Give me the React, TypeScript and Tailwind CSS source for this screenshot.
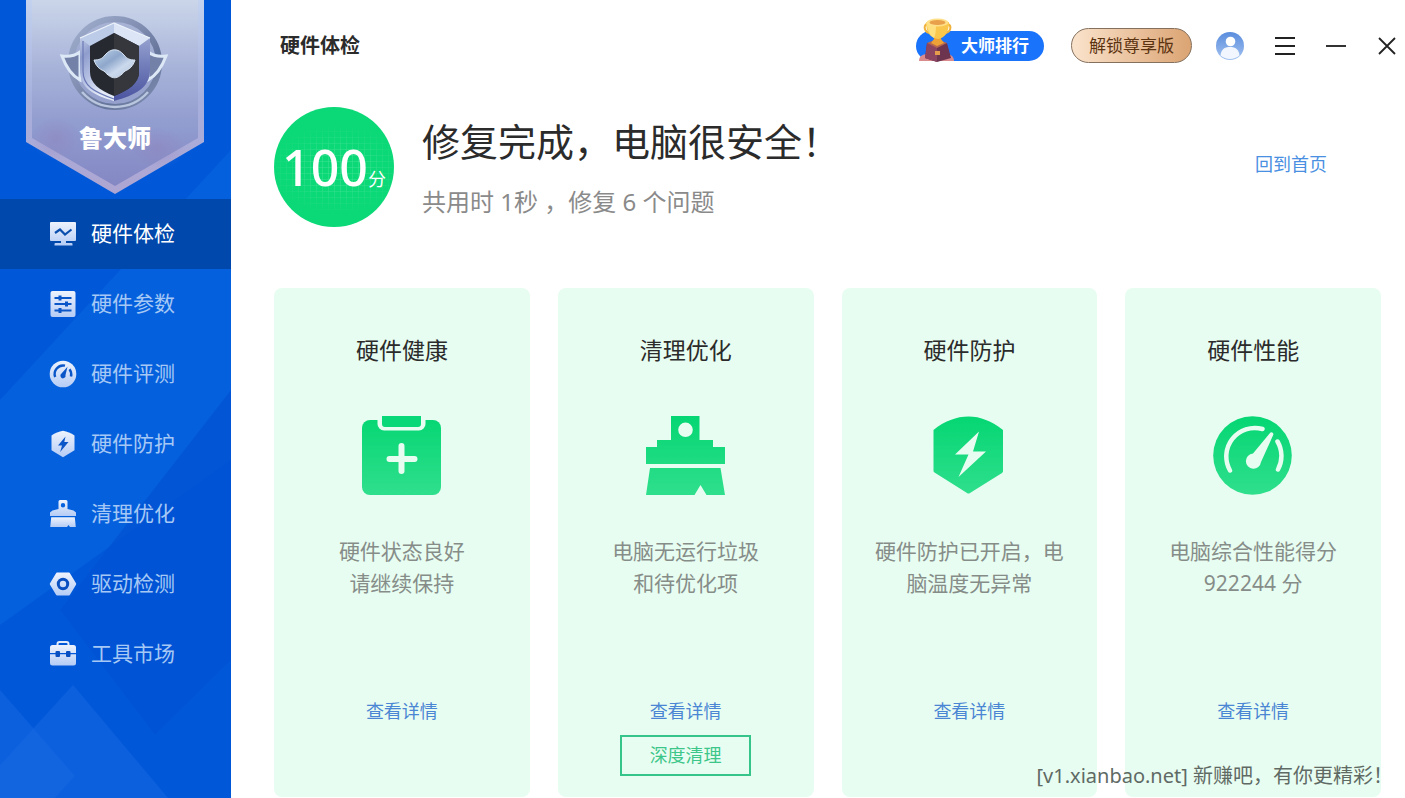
import type { ReactNode } from 'react';
import clsx from 'clsx';

const NAV = [
  { label: '硬件体检', icon: MonitorIcon },
  { label: '硬件参数', icon: SlidersIcon },
  { label: '硬件评测', icon: GaugeIcon },
  { label: '硬件防护', icon: BoltIcon },
  { label: '清理优化', icon: BrushIcon },
  { label: '驱动检测', icon: NutIcon },
  { label: '工具市场', icon: ToolboxIcon },
];

const CARDS = [
  { title: '硬件健康', text: '硬件状态良好\n请继续保持', icon: ClipboardArt },
  { title: '清理优化', text: '电脑无运行垃圾\n和待优化项', icon: BrushArt, action: '深度清理' },
  { title: '硬件防护', text: '硬件防护已开启，电\n脑温度无异常', icon: ShieldArt },
  { title: '硬件性能', text: '电脑综合性能得分\n922244 分', icon: GaugeArt },
];

/* Sidebar icons */

function NavSvg({ children }: { children: ReactNode }) {
  return (
    <svg width="28" height="28" viewBox="0 0 28 28" aria-hidden="true" className="shrink-0">
      {children}
    </svg>
  );
}

function MonitorIcon() {
  return (
    <NavSvg>
      <path fill="url(#nav)" d="M2 2h24a1 1 0 0 1 1 1v17a1 1 0 0 1-1 1h-9v2h5.500a1 1 0 0 1 1 1v1.500h-18V24a1 1 0 0 1 1-1H12v-2H2a1 1 0 0 1-1-1V3a1 1 0 0 1 1-1z" />
      <path d="M6 13 11 9.500 16 14.500 22.500 9.500" fill="none" stroke="#0b4fae" strokeWidth="2.200" />
    </NavSvg>
  );
}

function SlidersIcon() {
  return (
    <NavSvg>
      <rect x="1.500" y="1" width="25" height="26" rx="2" fill="url(#nav)" />
      <path d="M5.500 8h17M5.500 14h17M5.500 20.500h17" stroke="#0a55c8" strokeWidth="2" />
      <path d="M11 5.500v5M17.500 11.500v5M11 18v5" stroke="#0a55c8" strokeWidth="3" />
    </NavSvg>
  );
}

function GaugeIcon() {
  return (
    <NavSvg>
      <circle cx="14" cy="14" r="13.300" fill="url(#nav)" />
      <path d="M6.200 17a8.500 8.500 0 0 1 9.800-11.300M20.500 9.200a8.500 8.500 0 0 1 1.500 7.300" fill="none" stroke="#0a55c8" strokeWidth="2.400" />
      <path d="M18.500 6.800 16.500 15a2.600 2.600 0 1 1-4-1.400z" fill="#0a55c8" />
    </NavSvg>
  );
}

function BoltIcon() {
  return (
    <NavSvg>
      <path fill="url(#nav)" d="M14 .8c4 .6 8 2.200 11.500 4.700v14.700L14 27.200 2.500 20.200V5.500C6 3 10 1.400 14 .8z" />
      <path d="M16.500 6.500 9 15.500h4l-1.800 6.500L19.500 12h-4.200z" fill="#0a55c8" />
    </NavSvg>
  );
}

function BrushIcon() {
  return (
    <NavSvg>
      <path
        fill="url(#nav)"
        fillRule="evenodd"
        d="M11 0h6a1.500 1.500 0 0 1 1.500 1.500V9l6 1.500 2.500 2V16H1v-3.500l2.500-2 6-1.500V1.500A1.500 1.500 0 0 1 11 0zm3 3a2.200 2.200 0 1 0 0 4.400A2.200 2.200 0 0 0 14 3z"
      />
      <path fill="url(#nav)" d="M2.200 17.200h23.600l1 9.800H21l-1.500-2-1.500 2H1.200z" />
    </NavSvg>
  );
}

function NutIcon() {
  return (
    <NavSvg>
      <path fill="url(#nav)" d="M8 2.500h12a1 1 0 0 1 .8.500l6.200 10.200c.3.500.3 1 0 1.500L20.800 25a1 1 0 0 1-.8.500H8a1 1 0 0 1-.8-.5L1 14.700c-.3-.5-.3-1 0-1.500L7.200 3a1 1 0 0 1 .8-.5z" />
      <circle cx="14" cy="14" r="4.700" fill="none" stroke="#0a4fc0" strokeWidth="3" />
    </NavSvg>
  );
}

function ToolboxIcon() {
  return (
    <NavSvg>
      <path d="M8.500 6V4a2 2 0 0 1 2-2h7a2 2 0 0 1 2 2v2" fill="none" stroke="#e4ecfb" strokeWidth="2" />
      <path fill="url(#nav)" d="M3.500 5h21A2.500 2.500 0 0 1 27 7.500V13H1V7.500A2.500 2.500 0 0 1 3.500 5zM1 14.300h26V23a2.500 2.500 0 0 1-2.500 2.500h-21A2.500 2.500 0 0 1 1 23z" />
      <rect x="6.500" y="11" width="4.500" height="6" rx="1" fill="#0a4fc0" />
      <rect x="17" y="11" width="4.500" height="6" rx="1" fill="#0a4fc0" />
    </NavSvg>
  );
}

/* Card pictures */

function CardSvg({ children }: { children: ReactNode }) {
  return (
    <svg width="80" height="80" viewBox="0 0 80 80" aria-hidden="true" className="mt-12">
      {children}
    </svg>
  );
}

function ClipboardArt() {
  return (
    <CardSvg>
      <rect x="0" y="4" width="79" height="75" rx="8" fill="url(#card)" />
      <path d="M15.500 0h48v8a6.500 6.500 0 0 1-6.500 6.500H22A6.500 6.500 0 0 1 15.500 8z" fill="#e8fdf1" />
      <path d="M20 0h39v8a3 3 0 0 1-3 3H23a3 3 0 0 1-3-3z" fill="#08d877" />
      <path d="M39.500 30v25M27.500 43h25" stroke="#e8fdf1" strokeWidth="6" strokeLinecap="round" />
    </CardSvg>
  );
}

function BrushArt() {
  return (
    <CardSvg>
      <path
        fill="url(#card)"
        fillRule="evenodd"
        d="M25 0h28.500v24H67v7h12v17H0V31h11v-7h14zM39.500 6.500a7.300 7.300 0 1 0 0 14.600 7.300 7.300 0 0 0 0-14.600z"
      />
      <path fill="url(#card)" d="M4 52h70.500L79 79H60.500L54.500 69 48.500 79H0z" />
    </CardSvg>
  );
}

function ShieldArt() {
  return (
    <CardSvg>
      <path fill="url(#card)" d="M39.500.5c12 0 23 4.500 34.500 13.500v41c0 1-.5 1.500-1 2L41 77c-1 .7-2 .7-3 0L5.500 56.500c-.7-.5-1-1-1-2V14C15.500 5 27.500.5 39.500.5z" />
      <path d="M50 15.500 26 38.500h13.500L29.500 61 57 35.500H44z" fill="#e8fdf1" />
    </CardSvg>
  );
}

function GaugeArt() {
  return (
    <CardSvg>
      <circle cx="39.500" cy="39.500" r="39.300" fill="url(#card)" />
      <path d="M17 54.500a28.500 28.500 0 0 1 32.500-41.500M64.500 25.500a28.500 28.500 0 0 1 .5 28" fill="none" stroke="#e8fdf1" strokeWidth="4.500" strokeLinecap="round" />
      <path d="M57 17c1-1.600 4-.2 3.300 1.800L48 46a7.600 7.600 0 1 1-8-8.500z" fill="#e8fdf1" />
    </CardSvg>
  );
}

/* Shared gradients */
function Gradients() {
  return (
    <svg width="0" height="0" className="absolute" aria-hidden="true">
      <defs>
        <linearGradient id="nav" x1="0" y1="0" x2="0" y2="1">
          <stop offset="0" stopColor="#eef3fd" />
          <stop offset="1" stopColor="#b5ccf5" />
        </linearGradient>
        <linearGradient id="card" gradientUnits="userSpaceOnUse" x1="0" y1="0" x2="0" y2="80">
          <stop offset="0" stopColor="#05d673" />
          <stop offset="1" stopColor="#30df8d" />
        </linearGradient>
      </defs>
    </svg>
  );
}

function Banner() {
  return (
    <svg width="178" height="194" viewBox="26 0 178 194" className="ml-[26px] block" role="img" aria-label="鲁大师">
      <defs>
        <linearGradient id="bn" x1="0" y1="0" x2="0" y2="1">
          <stop offset="0" stopColor="#cbd6ea" />
          <stop offset=".35" stopColor="#a9b4da" />
          <stop offset=".7" stopColor="#8f9ace" />
          <stop offset="1" stopColor="#8487c3" />
        </linearGradient>
        <linearGradient id="edge" x1="0" y1="0" x2="0" y2="1">
          <stop offset="0" stopColor="#c3d2ef" />
          <stop offset=".5" stopColor="#a6b0dd" />
          <stop offset="1" stopColor="#aea5d2" />
        </linearGradient>
        <linearGradient id="ring" x1="0" y1="0" x2="1" y2="1">
          <stop offset="0" stopColor="#a3b1cf" />
          <stop offset=".4" stopColor="#8491b5" />
          <stop offset=".7" stopColor="#65749a" />
          <stop offset="1" stopColor="#8291b4" />
        </linearGradient>
        <linearGradient id="left" x1="0" y1="0" x2=".4" y2="1">
          <stop offset="0" stopColor="#e3ebf8" />
          <stop offset=".4" stopColor="#8f9dcd" />
          <stop offset=".7" stopColor="#b7c2e4" />
          <stop offset="1" stopColor="#e4ebf8" />
        </linearGradient>
        <linearGradient id="right" x1="0" y1="0" x2="0" y2="1">
          <stop offset="0" stopColor="#a9b6da" />
          <stop offset=".5" stopColor="#7682bd" />
          <stop offset="1" stopColor="#4a539f" />
        </linearGradient>
        <linearGradient id="gem" x1="0" y1="0" x2="1" y2="1">
          <stop offset="0" stopColor="#c4d8ec" />
          <stop offset=".4" stopColor="#8ea7cb" />
          <stop offset=".65" stopColor="#cbd9ed" />
          <stop offset="1" stopColor="#b3c0d8" />
        </linearGradient>
        <radialGradient id="haze">
          <stop offset="0" stopColor="#907fb8" stopOpacity=".4" />
          <stop offset="1" stopColor="#907fb8" stopOpacity="0" />
        </radialGradient>
      </defs>
      <path d="M26 0h178v142l-89 52-89-52z" fill="url(#edge)" />
      <path d="M32 0h166v138l-83 48-83-48z" fill="url(#bn)" />
      <ellipse cx="56" cy="138" rx="24" ry="22" fill="url(#haze)" />
      <ellipse cx="158" cy="148" rx="28" ry="20" fill="url(#haze)" />
      {/* ring */}
      <circle cx="115" cy="63" r="43" fill="#8f9cc6" opacity=".5" />
      <circle cx="115" cy="63" r="44" fill="none" stroke="url(#ring)" strokeWidth="6" />
      <path d="M82 92a44 44 0 0 0 66 0" fill="none" stroke="#b9c6de" strokeWidth="2.500" />
      {/* wings */}
      <path d="M62 56c8 1 14-1 18-4v28c-9-5-14-13-18-24z" fill="#7381a8" stroke="#dce8f5" strokeWidth="3" />
      <path d="M166 56c-8 1-14-1-18-4v28c9-5 14-13 18-24z" fill="#7381a8" stroke="#dce8f5" strokeWidth="3" />
      {/* shield */}
      <path d="M114 23 80 38v32c0 18 13 25 34 31z" fill="url(#left)" />
      <path d="m114 23 36 15v32c0 18-15 25-36 31z" fill="url(#right)" />
      <path d="M114 23 80 38l10 8 24-13z" fill="#bccbe7" />
      <path d="m114 23 36 15-11 8-25-13z" fill="#dbe5f5" />
      <path d="M114 23 80 38M114 23l36 15" stroke="#eef4fb" strokeWidth="1.200" />
      <path d="M83 41v30c0 15 11 21 31 28" fill="none" stroke="#6a79b5" strokeWidth="1.200" />
      <path d="M114 33 90 46v26c0 11 9 18 24 24 15-6 25-13 25-24V46z" fill="#26292f" />
      <path d="m114 33 25 13v26c0 11-10 18-25 24z" fill="#36373c" />
      <path d="M94 60c5 0 8-1 11-5 6-7 13-7 19 0 3 4 6 5 11 5-2 6-5 9-10 11-8 9-13 9-21 0-5-2-8-5-10-11z" fill="url(#gem)" stroke="#d8e4f3" />
      <text x="115" y="147" textAnchor="middle" fill="#fff" fontSize="24" fontWeight="900">
        鲁大师
      </text>
    </svg>
  );
}

function SidebarBackdrop() {
  return (
    <svg className="absolute inset-0 -z-10 size-full" viewBox="0 0 231 798" preserveAspectRatio="none" aria-hidden="true">
      <path d="M0 0h231v798H0z" fill="#0058d9" />
      <path d="M0 400 231 150v310L0 625z" fill="#0560dd" />
      <path d="M231 390 60 610l95 125 76-75z" fill="#0050d1" opacity=".6" />
      <path d="M73 685 168 798H0V765z" fill="#1768e1" opacity=".5" />
      <path d="M0 690l75 86-20 22H0z" fill="#1768e1" opacity=".5" />
    </svg>
  );
}

function Trophy() {
  return (
    <svg width="42" height="44" viewBox="0 0 42 44" aria-hidden="true" className="absolute -bottom-px left-0">
      <path d="M3 43c0-5 4-7 8-7h20c4 0 7 3 7 7z" fill="#d98b8d" />
      <path d="M11 25h20l4 15-14 4-12-4z" fill="#6d344f" />
      <path d="M11 25l10 4v15L9 40z" fill="#8b4560" />
      <path d="m21 21 10 4-10 5-10-5z" fill="#b7674e" />
      <path d="M19 33h5v4h-5z" fill="#e59a4c" />
      <path d="M18 15h7v6l3 4-7 3-6-3 3-4z" fill="#eea136" />
      <path d="M11 6c-4 1-3 9 4 9M32 6c4 2 3 9-4 9" fill="none" stroke="#efb23d" strokeWidth="2" />
      <path d="M10 4h23c0 10-4 16-11 17C14 20 10 14 10 4z" fill="#fac74d" />
      <path d="M10 4c2 9 4 14 8 16 2-4 2-10 2-15z" fill="#ffe07f" />
      <ellipse cx="21.500" cy="4.500" rx="11" ry="4" fill="#ffe08a" />
      <ellipse cx="21.500" cy="4.500" rx="8" ry="2.500" fill="#e8a04a" />
    </svg>
  );
}

function Avatar() {
  return (
    <svg width="28" height="28" viewBox="0 0 28 28" aria-hidden="true">
      <defs>
        <linearGradient id="av" x1="0" y1="0" x2="0" y2="1">
          <stop offset="0" stopColor="#5a8ddd" />
          <stop offset="1" stopColor="#a3c2f0" />
        </linearGradient>
      </defs>
      <circle cx="14" cy="14" r="14" fill="url(#av)" />
      <circle cx="14.500" cy="9.500" r="4.800" fill="#fff" />
      <path d="M4.500 23.500c.5-6 4-8.500 9.500-8.500s9 2.500 9.500 8.500c-5 4.500-14 4.500-19 0z" fill="#f2f7ff" />
    </svg>
  );
}

function Sidebar() {
  return (
    <aside className="relative isolate w-[231px] shrink-0 overflow-hidden">
      <SidebarBackdrop />
      <Banner />
      <nav className="mt-[5px]">
        {NAV.map((item, i) => (
          <a
            key={item.label}
            href="#"
            aria-current={i === 0 ? 'page' : undefined}
            className={clsx(
              'flex h-[70px] items-center gap-[14px] pl-[49px] text-[21px]',
              i === 0 ? 'bg-[#0048ab] text-white' : 'text-[#a5c8f5]'
            )}
          >
            <item.icon />
            {item.label}
          </a>
        ))}
      </nav>
    </aside>
  );
}

function TopBar() {
  return (
    <header className="flex h-[91px] items-center pr-2 pl-[6px]">
      <h1 className="flex-1 text-[20px] font-bold">硬件体检</h1>
      <button className="relative h-[30px] w-32 rounded-full bg-[#1a73fb] pl-[45px] text-left text-[17px] leading-[30px] font-bold whitespace-nowrap text-white">
        <Trophy />
        大师排行
      </button>
      <button className="ml-[27px] h-[35px] w-[121px] rounded-full border border-[#85705d] bg-linear-to-r from-[#fae3cc] to-[#dba473] text-[17px] leading-[33px] whitespace-nowrap text-[#5c3310]">
        解锁尊享版
      </button>
      <button aria-label="用户" className="ml-6">
        <Avatar />
      </button>
      <button aria-label="菜单" className="ml-[30px]">
        <svg width="22" height="20" viewBox="0 0 22 20" stroke="#222" strokeWidth="2">
          <path d="M1 2h20M1 10h20M1 18h20" />
        </svg>
      </button>
      <button aria-label="最小化" className="ml-[29px]">
        <svg width="22" height="20" viewBox="0 0 22 20" stroke="#333" strokeWidth="2">
          <path d="M1 10h20" />
        </svg>
      </button>
      <button aria-label="关闭" className="ml-[30px]">
        <svg width="20" height="20" viewBox="0 0 20 20" stroke="#222" strokeWidth="1.800">
          <path d="m2 2 16 16M18 2 2 18" />
        </svg>
      </button>
    </header>
  );
}

function Score() {
  return (
    <div className="relative isolate flex size-[120px] shrink-0 items-center justify-center overflow-hidden rounded-full bg-[#0bd877] text-white">
      <svg className="absolute inset-0 -z-10" width="120" height="120" aria-hidden="true">
        <defs>
          <pattern id="grid" width="6" height="6" patternUnits="userSpaceOnUse">
            <path d="M0 0h6M0 0v6" stroke="#5fe9a5" strokeWidth="1" opacity=".6" />
          </pattern>
          <radialGradient id="fade">
            <stop offset=".4" stopColor="#fff" />
            <stop offset="1" stopColor="#fff" stopOpacity="0" />
          </radialGradient>
          <mask id="gridMask">
            <ellipse cx="64" cy="62" rx="72" ry="46" fill="url(#fade)" />
          </mask>
        </defs>
        <rect width="120" height="120" fill="url(#grid)" mask="url(#gridMask)" />
      </svg>
      <p className="flex items-baseline">
        <span className="text-[50px] leading-none font-medium">100</span>
        <span className="text-[18px] leading-none">分</span>
      </p>
    </div>
  );
}

export default function App() {
  return (
    <div className="relative flex min-h-screen bg-white font-['Noto_Sans','Noto_Sans_CJK_SC',sans-serif] text-[#2b2b2b]">
      <Gradients />
      <Sidebar />

      <main className="flex min-w-0 flex-1 flex-col pl-[43px]">
        <TopBar />

        <section className="mt-4 flex items-center pr-[78px]">
          <Score />
          <div className="ml-7 flex-1">
            <h2 className="text-[38px] leading-[54px]">修复完成，电脑很安全！</h2>
            <p className="mt-4 text-[24px] leading-9 text-[#8a8a8a]">共用时 1秒 ，修复 6 个问题</p>
          </div>
          <a href="#" className="mb-[6px] text-[18px] text-[#4a90e2]">
            回到首页
          </a>
        </section>

        <section className="mt-[61px] grid flex-1 grid-cols-4 gap-7 pr-6 pb-px">
          {CARDS.map((card) => (
            <article key={card.title} className="flex flex-col items-center rounded-lg bg-[#e8fdf1] pt-11 pb-5">
              <h3 className="text-[23px] leading-9">{card.title}</h3>
              <card.icon />
              <p className="mt-[39px] text-center text-[21px] leading-8 whitespace-pre-line text-[#868d89]">{card.text}</p>
              <a href="#" className="mt-[98px] text-[18px] leading-7 text-[#4a86d4]">
                查看详情
              </a>
              {card.action && (
                <button className="mt-[10px] h-[41px] w-[131px] border-2 border-[#35c489] text-[18px] text-[#3cc68a]">
                  {card.action}
                </button>
              )}
            </article>
          ))}
        </section>
      </main>

      <p className="absolute right-3 bottom-2 text-[20px] leading-7 text-[#5f6a65]">[v1.xianbao.net] 新赚吧，有你更精彩！</p>
    </div>
  );
}
